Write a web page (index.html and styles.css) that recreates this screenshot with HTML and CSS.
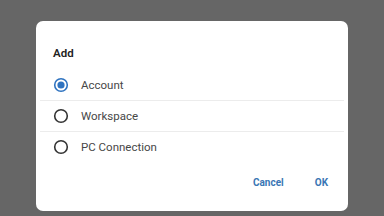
FILE: index.html
```html
<!DOCTYPE html>
<html>
<head>
<meta charset="utf-8">
<link rel="stylesheet" href="styles.css">
</head>
<body>
<div class="dialog">
  <div class="title">Add</div>
  <div class="list">
    <div class="row">
      <svg class="radio" width="16" height="16" viewBox="0 0 16 16"><circle cx="8" cy="8" r="6.3" fill="none" stroke="#2f73c0" stroke-width="1.6"/><circle cx="8" cy="8" r="3.6" fill="#2f73c0"/></svg>
      <span class="label">Account</span>
    </div>
    <div class="row">
      <svg class="radio" width="16" height="16" viewBox="0 0 16 16"><circle cx="8" cy="8" r="6.3" fill="none" stroke="#333" stroke-width="1.6"/></svg>
      <span class="label">Workspace</span>
    </div>
    <div class="row last">
      <svg class="radio" width="16" height="16" viewBox="0 0 16 16"><circle cx="8" cy="8" r="6.3" fill="none" stroke="#333" stroke-width="1.6"/></svg>
      <span class="label">PC Connection</span>
    </div>
  </div>
  <div class="actions">
    <span class="btn">Cancel</span>
    <span class="btn">OK</span>
  </div>
</div>
</body>
</html>
```
FILE: styles.css
```css
html, body {
  margin: 0;
  padding: 0;
  background: #666666;
  width: 384px;
  height: 216px;
  overflow: hidden;
  font-family: Roboto, "Liberation Sans", sans-serif;
}
body {
  padding: 21px 0 0 36px;
  box-sizing: border-box;
}
.dialog {
  width: 312px;
  height: 190px;
  background: #ffffff;
  border-radius: 7px;
  box-sizing: border-box;
  padding-top: 24px;
  display: flex;
  flex-direction: column;
}
.title {
  padding-left: 17px;
  font-size: 11.5px;
  font-weight: 600;
  line-height: 16px;
  color: #222222;
}
.list {
  margin: 9px 4px 0 4px;
}
.row {
  height: 30px;
  display: flex;
  align-items: center;
  border-bottom: 1px solid #ececec;
  padding-left: 13px;
}
.row.last {
  border-bottom: none;
}
.radio {
  flex: none;
}
.label {
  margin-left: 12px;
  font-size: 11.5px;
  color: #474747;
}
.actions {
  display: flex;
  justify-content: flex-end;
  gap: 31px;
  padding-right: 20px;
  margin-top: 14px;
}
.btn {
  font-size: 10px;
  font-weight: 700;
  color: #3a76b4;
  line-height: 14px;
}
```
